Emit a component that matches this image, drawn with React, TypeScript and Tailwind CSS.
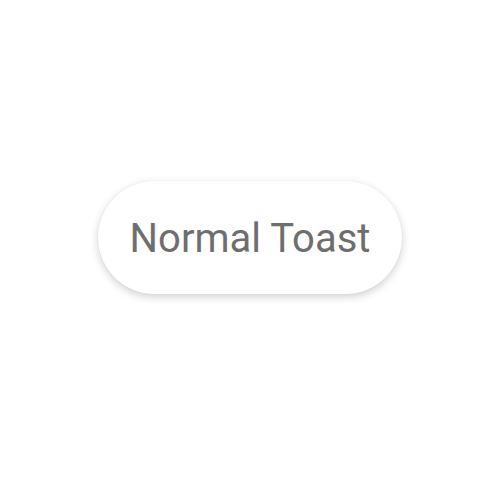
import React from 'react';

const App = () => {
  return (
    <div className="w-[500px] h-[500px] bg-white flex items-center justify-center">
      <div className="mt-[-25px] w-[304px] h-[113px] rounded-full bg-white flex items-center justify-center shadow-[0_3px_8px_rgba(0,0,0,0.18),0_0_2px_rgba(0,0,0,0.06)]">
        <span className="text-[40px] leading-none text-[#6e6e6e] font-['Roboto',sans-serif] mt-[2px]">
          Normal Toast
        </span>
      </div>
    </div>
  );
};

export default App;
